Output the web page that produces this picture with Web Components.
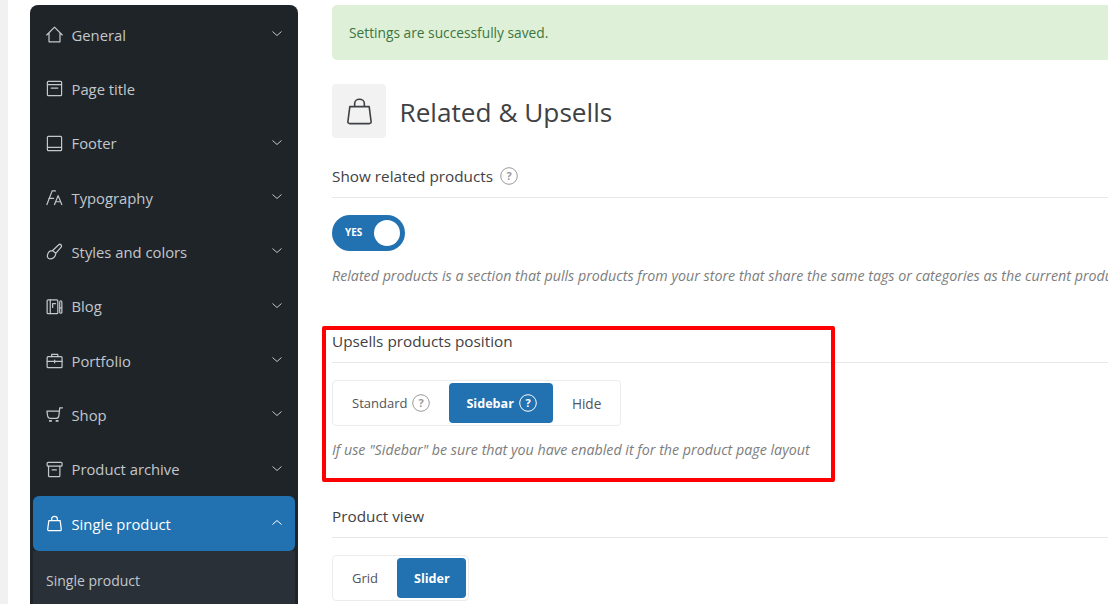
<!DOCTYPE html>
<html>
<head>
<meta charset="utf-8">
<title>Related & Upsells</title>
<style>
  html, body { margin: 0; height: 604px; overflow: hidden; background: #fff; }
  body { display: flex; font-family: "Open Sans", "Noto Sans", sans-serif; color: #444; position: relative; }
</style>
</head>
<body>
<side-strip></side-strip>
<theme-sidebar>
  <nav-item icon="home" arrow="down">General</nav-item>
  <nav-item icon="title">Page title</nav-item>
  <nav-item icon="footer" arrow="down">Footer</nav-item>
  <nav-item icon="type" arrow="down">Typography</nav-item>
  <nav-item icon="brush" arrow="down">Styles and colors</nav-item>
  <nav-item icon="blog" arrow="down">Blog</nav-item>
  <nav-item icon="case" arrow="down">Portfolio</nav-item>
  <nav-item icon="cart" arrow="down">Shop</nav-item>
  <nav-item icon="archive" arrow="down">Product archive</nav-item>
  <nav-item icon="bag" arrow="up" active>Single product</nav-item>
  <nav-sub>Single product</nav-sub>
</theme-sidebar>
<settings-main>
  <save-alert>Settings are successfully saved.</save-alert>
  <page-heading>Related &amp; Upsells</page-heading>
  <setting-block label="Show related products" help style="height:165px">
    <yes-toggle></yes-toggle>
    <hint-text style="margin-top:15px">Related products is a section that pulls products from your store that share the same tags or categories as the current product.</hint-text>
  </setting-block>
  <setting-block label="Upsells products position" style="height:175px">
    <seg-group>
      <seg-option help>Standard</seg-option>
      <seg-option help active>Sidebar</seg-option>
      <seg-option style="font-size:13.6px">Hide</seg-option>
    </seg-group>
    <hint-text style="margin-top:14px">If use "Sidebar" be sure that you have enabled it for the product page layout</hint-text>
  </setting-block>
  <setting-block label="Product view">
    <seg-group>
      <seg-option>Grid</seg-option>
      <seg-option active>Slider</seg-option>
    </seg-group>
  </setting-block>
</settings-main>
<red-mark></red-mark>

<script>
const ICONS = {
  home: '<path d="M.8 9.500 9 1.200l8.200 8.300M3.200 7.500v9.300h11.600V7.500"/>',
  title: '<rect x="1.500" y="1.500" width="15" height="15" rx="1"/><path d="M1.500 5h15M5.500 8.500h7"/>',
  footer: '<rect x="1.500" y="1.500" width="15" height="15" rx="1"/><path d="M1.500 13h15"/>',
  type: '<path d="M1 16.500 6.500 2H10M3 10h5M9 16.500 12.800 7l3.900 9.500M10.300 13.500h5"/>',
  brush: '<path d="M7 8 13.500 1.800c1.500-1.300 3.800.8 2.500 2.500L10.300 11M7 8c-3 0-5 2-5.500 5-.3 2 .7 3.800 2.700 3.800 3.500 0 6.100-2.800 6.100-5.800Z"/>',
  blog: '<rect x="1.200" y="2" width="11.300" height="14.500" rx="1"/><path d="M4.500 2v14.500M7 6h3M7 6v4M14.500 5v10c0 1.500 2.300 1.500 2.300 0V5c0-2.800-2.300-2.800-2.300 0ZM14.500 10.500h2.300"/>',
  case: '<rect x="1.200" y="5" width="15.800" height="11.500" rx="1"/><path d="M6 5V2.500h6.500V5M1.200 10h15.800M9.200 8.500v3"/>',
  cart: '<path d="M1 5.500h13.200l-.6 5c-.2 1.500-1 2.500-2.600 2.500H4.500C3 13 2 12 1.700 10.500ZM14.200 5.500l.3-3.500h3"/><path d="M4 15.800h1.500M11 15.800h1.500" stroke-width="1.800"/>',
  archive: '<rect x="1.200" y="1.500" width="15.800" height="4" rx="1"/><path d="M2.700 5.500v10c0 .6.400 1 1 1h10c.6 0 1-.4 1-1v-10M6.500 9.500h4.500"/>',
  bag: '<path d="M3 6h12l1.200 9.200c.1.800-.4 1.300-1.200 1.300H3c-.8 0-1.300-.5-1.200-1.300ZM6 6V4c0-3.500 6-3.500 6 0v2"/>'
};

function define(name, style, html) {
  customElements.define(name, class extends HTMLElement {
    connectedCallback() {
      if (this.shadowRoot) return;
      this.attachShadow({ mode: 'open' });
      this.shadowRoot.innerHTML = `<style>${style}</style>${typeof html === 'function' ? html(this) : html}`;
    }
  });
}

const helpSvg = (color) => `<svg width="18" height="18" viewBox="0 0 18 18" style="flex:none"><circle cx="9" cy="9" r="8.300" fill="none" stroke="${color}" stroke-width="1"/><text x="9" y="13" text-anchor="middle" font-size="11" font-weight="700" fill="${color}" font-family="Open Sans, sans-serif">?</text></svg>`;

define('side-strip', `:host { display: block; flex: none; width: 8px; background: #f1f1f1; }`, ``);

define('theme-sidebar', `
  :host { display: block; flex: none; width: 262px; height: 596.500px; margin: 5px 0 0 22px; padding: 2.500px 3px 0; background: #1f2429; border-radius: 8px 8px 0 0; color: #c2c7cc; font-size: 14.800px; overflow: hidden; }
`, `<slot></slot>`);

define('nav-item', `
  :host { display: flex; align-items: center; height: 54.330px; padding: 0 13px; box-sizing: border-box; gap: 8.500px; }
  :host([active]) { background: #2271b1; color: #fff; border-radius: 6px; }
  svg.i { width: 17px; height: 17px; flex: none; fill: none; stroke: currentColor; stroke-width: 1.300; stroke-linejoin: round; stroke-linecap: round; }
  .t { flex: 1; }
  svg.a { width: 10px; height: 5px; flex: none; fill: none; stroke: currentColor; stroke-width: 1; margin-bottom: 2px; }
`, (el) => {
  const a = el.getAttribute('arrow');
  const arrow = a ? `<svg class="a" viewBox="0 0 10 5"><path d="${a === 'up' ? 'M.5 4.500 5 .5l4.500 4' : 'M.5 .5 5 4.500l4.500-4'}"/></svg>` : '';
  return `<svg class="i" viewBox="0 0 18 18">${ICONS[el.getAttribute('icon')]}</svg><span class="t"><slot></slot></span>${arrow}`;
});

define('nav-sub', `
  :host { display: flex; align-items: center; height: 60px; padding: 0 13px 40px; background: #2a3038; font-size: 14px; color: #c2c7cc; }
`, `<slot></slot>`);

define('settings-main', `
  :host { display: block; flex: 1; min-width: 0; margin: 5px 0 0 34px; overflow: hidden; }
`, `<slot></slot>`);

define('save-alert', `
  :host { display: flex; align-items: center; height: 55px; padding-left: 17px; background: #dff0d8; color: #3c763d; border-radius: 5px 0 0 5px; font-size: 13.750px; }
`, `<slot></slot>`);

define('page-heading', `
  :host { display: flex; align-items: center; gap: 13.500px; margin-top: 24px; height: 54px; font-size: 26.200px; color: #3f4144; }
  .box { width: 54px; height: 54px; border-radius: 4px; background: #f2f2f2; display: flex; align-items: center; justify-content: center; }
  svg { width: 29px; height: 29px; fill: none; stroke: #3f4144; stroke-width: 1; stroke-linejoin: round; }
  .t { padding-top: 2px; }
`, `<span class="box"><svg viewBox="0 0 18 18">${ICONS.bag}</svg></span><span class="t"><slot></slot></span>`);

define('setting-block', `
  :host { display: block; }
  .head { display: flex; align-items: center; gap: 7px; height: 60px; padding-top: 17px; box-sizing: border-box; border-bottom: 1px solid #e8e8e8; font-size: 15.300px; font-weight: 500; color: #3f4144; margin-bottom: 17px; }
`, (el) => `<div class="head">${el.getAttribute('label')}${el.hasAttribute('help') ? helpSvg('#9a9a9a') : ''}</div><slot></slot>`);

define('yes-toggle', `
  :host { display: flex; align-items: center; justify-content: space-between; width: 73px; height: 36px; border-radius: 18px; background: #2271b1; color: #fff; font-size: 10px; font-weight: 700; padding: 0 5px 0 13px; box-sizing: border-box; }
  span { padding-bottom: 2px; }
  i { width: 26px; height: 26px; border-radius: 50%; background: #fff; }
`, `<span>YES</span><i></i>`);

define('hint-text', `
  :host { display: block; font-size: 14.250px; font-style: italic; font-weight: 400; color: #7d7d7d; white-space: nowrap; overflow: hidden; }
`, `<slot></slot>`);

define('seg-group', `
  :host { display: inline-flex; gap: 2px; padding: 2px; border: 1px solid #ececec; border-radius: 4px; }
`, `<slot></slot>`);

define('seg-option', `
  :host { display: flex; align-items: center; gap: 5px; height: 40px; padding: 0 17px; border-radius: 4px; font-size: 13px; font-weight: 500; color: #50545a; }
  :host([active]) { background: #2271b1; color: #fff; font-weight: 700; font-size: 12.600px; padding-right: 16px; }
`, (el) => `<slot></slot>${el.hasAttribute('help') ? helpSvg(el.hasAttribute('active') ? '#fff' : '#9a9a9a') : ''}`);

define('red-mark', `
  :host { position: absolute; left: 322px; top: 326px; width: 513px; height: 156px; box-sizing: border-box; border: 4px solid #f00; border-radius: 2px; pointer-events: none; }
`, ``);
</script>
</body>
</html>
